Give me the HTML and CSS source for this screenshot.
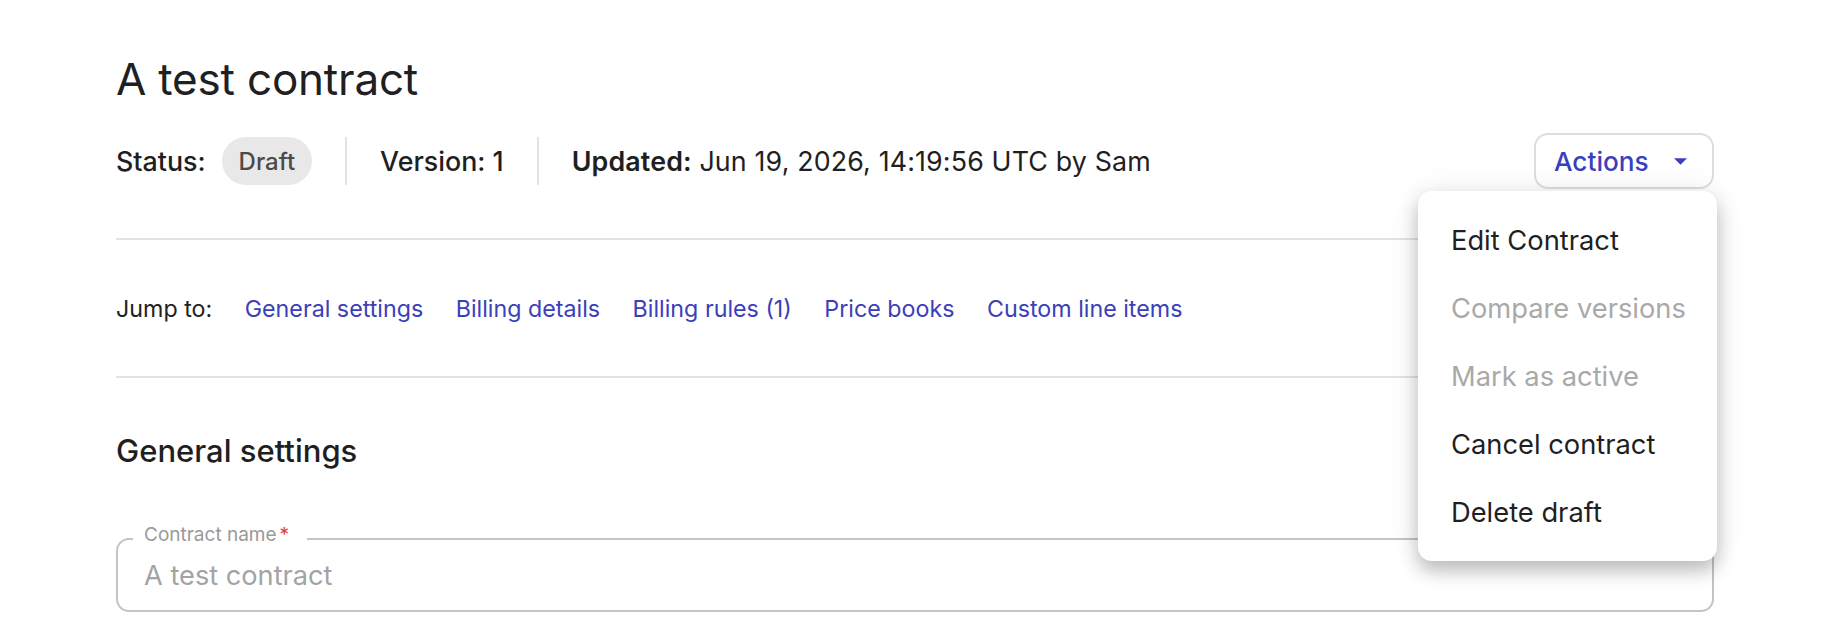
FILE: index.html
```html
<!DOCTYPE html>
<html lang="en">
<head>
<meta charset="utf-8">
<title>A test contract</title>
<link rel="stylesheet" href="styles.css">
</head>
<body>
<main class="page">
  <h1 class="title">A test contract</h1>
  <div class="meta-row">
    <div class="meta">
      <div class="meta-item meta-strong">Status:<span class="chip">Draft</span></div>
      <span class="sep"></span>
      <div class="meta-item meta-strong">Version: 1</div>
      <span class="sep"></span>
      <div class="meta-item meta-updated"><span class="label">Updated:</span> Jun 19, 2026, 14:19:56 UTC by Sam</div>
    </div>
    <div class="actions-wrap">
      <button class="actions-btn" type="button">
        <span>Actions</span>
        <svg class="caret" viewBox="0 0 10 5" width="13" height="7" aria-hidden="true"><path d="M0 0 L5 5 L10 0 Z" fill="currentColor"/></svg>
      </button>
      <ul class="menu">
        <li class="menu-item">Edit Contract</li>
        <li class="menu-item is-disabled">Compare versions</li>
        <li class="menu-item is-disabled">Mark as active</li>
        <li class="menu-item">Cancel contract</li>
        <li class="menu-item">Delete draft</li>
      </ul>
    </div>
  </div>
  <hr class="divider divider-top">
  <nav class="jump">
    <span class="jump-label">Jump to:</span>
    <a class="jump-link" href="#general">General settings</a>
    <a class="jump-link" href="#billing">Billing details</a>
    <a class="jump-link" href="#rules">Billing rules (1)</a>
    <a class="jump-link" href="#prices">Price books</a>
    <a class="jump-link" href="#custom">Custom line items</a>
  </nav>
  <hr class="divider">
  <section class="section" id="general">
    <h2 class="section-title">General settings</h2>
    <div class="field">
      <label class="field-label" for="cname">Contract name<span class="req">*</span></label>
      <input class="field-input" id="cname" type="text" placeholder="A test contract">
    </div>
  </section>
</main>
</body>
</html>
```

FILE: styles.css
```css
* { box-sizing: border-box; }

html, body {
  margin: 0;
  background: #ffffff;
}

body {
  font-family: Inter, "Noto Sans", "Liberation Sans", sans-serif;
  color: #1f1f1f;
}

.page {
  padding: 53px 120px 0 116px;
}

.title {
  margin: 0;
  font-size: 44px;
  line-height: 52px;
  font-weight: 400;
  color: #202020;
  letter-spacing: -0.2px;
}

.meta-row {
  margin-top: 28px;
  height: 56px;
  display: flex;
  align-items: center;
  justify-content: space-between;
}

.meta {
  display: flex;
  align-items: center;
  font-size: 26.8px;
  color: #1f1f1f;
}

.meta-item {
  display: flex;
  align-items: center;
  white-space: pre;
}

.meta-strong {
  font-weight: 500;
}

.meta-updated {
  letter-spacing: 0.15px;
}

.label {
  font-weight: 600;
}

.chip {
  height: 48px;
  display: inline-flex;
  align-items: center;
  margin-left: 16px;
  padding: 0 17px;
  border-radius: 24px;
  background: #e8e8e8;
  color: #4a4a4a;
  font-size: 24px;
  font-weight: 500;
}

.sep {
  width: 2px;
  height: 48px;
  background: #e2e2e2;
  margin: 0 33px;
}

.actions-wrap {
  position: relative;
}

.actions-btn {
  height: 56px;
  width: 180px;
  display: flex;
  align-items: center;
  justify-content: space-between;
  padding: 0 25px 0 18px;
  background: #ffffff;
  border: 2px solid #dedede;
  border-radius: 14px;
  font-family: inherit;
  font-size: 26.2px;
  font-weight: 500;
  color: #3a3fbd;
}

.caret {
  display: block;
}

.menu {
  position: absolute;
  top: calc(100% + 2px);
  right: -3px;
  width: 299px;
  margin: 0;
  padding: 15px 0;
  list-style: none;
  background: #ffffff;
  border-radius: 14px;
  box-shadow: 0 10px 18px rgba(0, 0, 0, 0.22), 0 2px 30px rgba(0, 0, 0, 0.10);
  z-index: 10;
}

.menu-item {
  height: 68px;
  display: flex;
  align-items: center;
  padding-left: 33px;
  font-size: 27.3px;
  color: #1f1f1f;
}

.menu-item.is-disabled {
  color: #a9a9a9;
}

.divider {
  margin: 0;
  border: 0;
  height: 2px;
  background: #e3e3e3;
}

.divider-top {
  margin-top: 49px;
}

.jump {
  height: 136px;
  display: flex;
  align-items: center;
  gap: 32.5px;
  font-size: 23.25px;
}

.jump-label {
  color: #222222;
}

.jump-link {
  color: #3b40b8;
  text-decoration: none;
}

.section-title {
  margin: 54px 0 0;
  font-size: 31px;
  line-height: 38px;
  font-weight: 500;
  color: #1f1f1f;
}

.field {
  position: relative;
  margin-top: 68px;
  height: 74px;
  border: 2px solid #c4c4c4;
  border-radius: 13px;
}

.field-label {
  position: absolute;
  top: -15px;
  left: 15px;
  padding: 0 18px 0 11px;
  background: #ffffff;
  font-size: 19px;
  line-height: 20px;
  color: #9a9a9a;
}

.req {
  color: #e53935;
  margin-left: 3px;
}

.field-input {
  width: 100%;
  height: 100%;
  border: 0;
  outline: none;
  background: transparent;
  padding: 0 26px;
  font-family: inherit;
  font-size: 27.2px;
  color: #1f1f1f;
}

.field-input::placeholder {
  color: #a3a3a3;
  opacity: 1;
}
```
